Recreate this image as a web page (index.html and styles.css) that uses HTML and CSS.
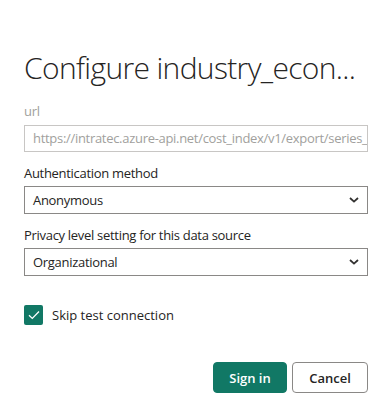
FILE: index.html
```html
<!DOCTYPE html>
<html lang="en">
<head>
  <meta charset="UTF-8" />
  <meta name="viewport" content="width=device-width, initial-scale=1.0"/>
  <title>Configure data source</title>
  <link rel="stylesheet" href="styles.css">
</head>
<body>
  <div class="dialog">
    <h1 class="title">Configure industry_econ...</h1>

    <!-- url (read only) -->
    <div class="field">
      <label class="label disabled">url</label>
      <div class="textbox">https://intratec.azure-api.net/cost_index/v1/export/series_id</div>
    </div>

    <div class="field">
      <label class="label">Authentication method</label>
      <div class="dropdown">
        <span>Anonymous</span>
        <svg width="10" height="6" viewBox="0 0 10 6"><path d="M1 1l4 3.6L9 1" fill="none" stroke="#323130" stroke-width="1.8"/></svg>
      </div>
    </div>

    <div class="field">
      <label class="label">Privacy level setting for this data source</label>
      <div class="dropdown">
        <span>Organizational</span>
        <svg width="10" height="6" viewBox="0 0 10 6"><path d="M1 1l4 3.6L9 1" fill="none" stroke="#323130" stroke-width="1.8"/></svg>
      </div>
    </div>

    <div class="check-row">
      <span class="checkbox">
        <svg width="12" height="10" viewBox="0 0 12 10"><path d="M1 5.2l3.3 3.2L11 1.5" fill="none" stroke="#fff" stroke-width="1.3"/></svg>
      </span>
      <span>Skip test connection</span>
    </div>

    <div class="actions">
      <button class="btn primary">Sign in</button>
      <button class="btn">Cancel</button>
    </div>
  </div>
</body>
</html>
```

FILE: styles.css
```css
:root {
  --green: #117865;
  --text: #252423;
  --muted: #a19f9d;
  --border: #8a8886;
}
body {
  margin: 0;
  font-family: 'Open Sans', 'Noto Sans', sans-serif;
  color: var(--text);
  background: #fff;
}
.dialog {
  padding: 46px 20px 0 24px;
}
.title {
  margin: 0 0 11px 0;
  font-size: 30px;
  font-weight: 300;
  line-height: 44px;
  letter-spacing: -0.65px;
  white-space: nowrap;
}
.field {
  margin-bottom: 11px;
}
.label {
  display: block;
  font-size: 13px;
  line-height: 20px;
  letter-spacing: -0.3px;
  margin-bottom: 3px;
}
.label.disabled {
  color: var(--muted);
  margin-bottom: 4px;
}
.textbox {
  height: 27px;
  box-sizing: border-box;
  border: 1px solid #c8c6c4;
  padding: 0 8px;
  font-size: 13px;
  line-height: 25px;
  letter-spacing: -0.3px;
  color: var(--muted);
  white-space: nowrap;
  overflow: hidden;
  margin-bottom: 11px;
}
.dropdown {
  height: 28px;
  box-sizing: border-box;
  border: 1px solid var(--border);
  padding: 0 8px;
  display: flex;
  align-items: center;
  justify-content: space-between;
  font-size: 13px;
  letter-spacing: -0.3px;
}
.check-row {
  display: flex;
  align-items: center;
  gap: 9px;
  margin-top: 29px;
  font-size: 13px;
}
.checkbox {
  width: 19px;
  height: 20px;
  box-sizing: border-box;
  background: var(--green);
  border-radius: 2px;
  display: flex;
  align-items: center;
  justify-content: center;
}
.actions {
  display: flex;
  justify-content: flex-end;
  gap: 5px;
  margin-top: 37px;
}
.btn {
  height: 31px;
  width: 76px;
  border: 1px solid var(--border);
  border-radius: 4px;
  background: #fff;
  font-family: inherit;
  font-size: 13px;
  font-weight: 600;
  color: var(--text);
}
.btn.primary {
  width: 74px;
  background: var(--green);
  border-color: var(--green);
  color: #fff;
}
```
